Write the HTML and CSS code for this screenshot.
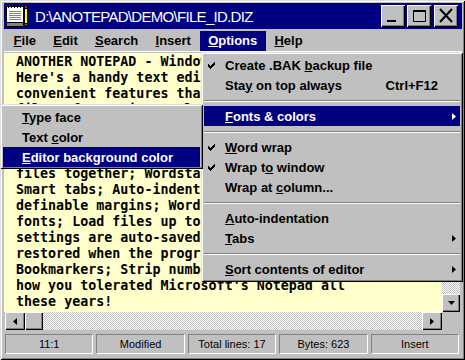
FILE: index.html
```html
<!DOCTYPE html>
<html lang="en">

<head>
    <meta charset="utf-8">
    <title>Another Notepad</title>
    <link rel="stylesheet" href="styles.css">
</head>

<body>
    <div class="window">
        <!-- title bar -->
        <header class="titlebar">
            <svg class="app-icon" viewBox="0 0 24 24" width="24" height="24">
                <rect x="1.5" y="2.5" width="17" height="20" fill="#fff" stroke="#000"/>
                <path d="M4 7.5h12M4 9.5h12M4 11.5h12M4 13.5h12M4 15.5h12" stroke="#808080"/>
                <rect x="2" y="18" width="16" height="4" fill="#808080"/>
                <path d="M2 18.5h16" stroke="#000"/>
                <path d="M3.5 1v3M6.5 1v3M9.5 1v3M12.5 1v3M15.5 1v3" stroke="#000"/>
                <rect x="19.5" y="4.5" width="3" height="15" fill="#ff0" stroke="#000"/>
                <rect x="19.5" y="1.5" width="3" height="3" fill="#f00" stroke="#000"/>
                <path d="M19.5 19.5l1.5 3.5l1.5-3.5z" fill="#c0c0c0" stroke="#000"/>
            </svg>
            <span class="titlebar__text">D:\ANOTEPAD\DEMO\FILE_ID.DIZ</span>
            <div class="titlebar__buttons">
                <span class="caption-btn">
                    <svg viewBox="0 0 24 22" width="24" height="22"><rect x="6" y="15" width="9" height="2" fill="#000"/></svg>
                </span>
                <span class="caption-btn caption-btn--max">
                    <svg viewBox="0 0 24 22" width="24" height="22"><path d="M6.5 5.5h12v11h-12z" fill="none" stroke="#000"/><rect x="6" y="5" width="13" height="2" fill="#000"/></svg>
                </span>
                <span class="caption-btn caption-btn--close">
                    <svg viewBox="0 0 24 22" width="24" height="22"><path d="M6 4l12 13M18 4l-12 13" stroke="#000" stroke-width="2"/></svg>
                </span>
            </div>
        </header>

        <!-- menu bar -->
        <nav class="menubar">
            <span class="menubar__item"><u>F</u>ile</span>
            <span class="menubar__item"><u>E</u>dit</span>
            <span class="menubar__item"><u>S</u>earch</span>
            <span class="menubar__item"><u>I</u>nsert</span>
            <span class="menubar__item menubar__item--open"><u>O</u>ptions</span>
            <span class="menubar__item"><u>H</u>elp</span>
        </nav>

        <!-- editor + scrollbars -->
        <div class="client">
            <div class="client__main">
<pre class="editor">ANOTHER NOTEPAD - Windows Notepad replacement
Here's a handy text editor for Windows with many
convenient features that Notepad lacks: Edit
files of any size; Multiple windows; Search &amp;
Replace; Printing with headers &amp; footers; Drag
&amp; drop; Insert date/time; Undo; Convert case;
Join lines; Sort lines; Fonts &amp; colors; Merge
files together; Wordstar keys; Bookmarks;
Smart tabs; Auto-indentation; Word wrap; User
definable margins; Word count; Choice of
fonts; Load files up to 16 MB; All your
settings are auto-saved on exit and
restored when the program starts again;
Bookmarkers; Strip numbers... You'll wonder
how you tolerated Microsoft's Notepad all
these years!
</pre>
                <div class="vscroll">
                    <span class="scroll-btn">
                        <svg viewBox="0 0 7 4" width="7" height="4"><path d="M3.5 0L7 4H0z"/></svg>
                    </span>
                    <span class="scroll-btn"></span>
                    <span class="scroll-track"></span>
                    <span class="scroll-btn">
                        <svg viewBox="0 0 7 4" width="7" height="4"><path d="M0 0h7L3.5 4z"/></svg>
                    </span>
                </div>
            </div>
            <div class="hscroll-row">
                <div class="hscroll">
                    <span class="scroll-btn scroll-btn--wide">
                        <svg viewBox="0 0 4 7" width="4" height="7"><path d="M4 0v7L0 3.5z"/></svg>
                    </span>
                    <span class="scroll-btn"></span>
                    <span class="scroll-track"></span>
                    <span class="scroll-btn scroll-btn--wide">
                        <svg viewBox="0 0 4 7" width="4" height="7"><path d="M0 0l4 3.5L0 7z"/></svg>
                    </span>
                </div>
                <div class="corner"></div>
            </div>
        </div>

        <!-- status bar -->
        <footer class="statusbar">
            <span class="statusbar__panel">11:1</span>
            <span class="statusbar__panel">Modified</span>
            <span class="statusbar__panel">Total lines: 17</span>
            <span class="statusbar__panel">Bytes: 623</span>
            <span class="statusbar__panel">Insert</span>
        </footer>

        <!-- Options dropdown -->
        <div class="menu menu--options">
            <div class="menu__item">
                <svg class="menu__check" viewBox="0 0 7 7" width="7" height="7"><path d="M0 2h1v1h1v1h1V3h1V2h1V1h1V0h1v3H6v1H5v1H4v1H3v1H2V6H1V5H0z"/></svg>
                <span class="menu__label">Create .BAK <u>b</u>ackup file</span>
            </div>
            <div class="menu__item">
                <span class="menu__label">Sta<u>y</u> on top always</span>
                <span class="menu__key">Ctrl+F12</span>
            </div>
            <div class="menu__sep"></div>
            <div class="menu__item menu__item--active">
                <span class="menu__label"><u>F</u>onts &amp; colors</span>
                <svg class="menu__arrow" viewBox="0 0 4 7" width="4" height="7"><path d="M0 0l4 3.5L0 7z"/></svg>
            </div>
            <div class="menu__sep"></div>
            <div class="menu__item">
                <svg class="menu__check" viewBox="0 0 7 7" width="7" height="7"><path d="M0 2h1v1h1v1h1V3h1V2h1V1h1V0h1v3H6v1H5v1H4v1H3v1H2V6H1V5H0z"/></svg>
                <span class="menu__label"><u>W</u>ord wrap</span>
            </div>
            <div class="menu__item">
                <svg class="menu__check" viewBox="0 0 7 7" width="7" height="7"><path d="M0 2h1v1h1v1h1V3h1V2h1V1h1V0h1v3H6v1H5v1H4v1H3v1H2V6H1V5H0z"/></svg>
                <span class="menu__label">Wrap t<u>o</u> window</span>
            </div>
            <div class="menu__item">
                <span class="menu__label">Wrap at <u>c</u>olumn...</span>
            </div>
            <div class="menu__sep"></div>
            <div class="menu__item">
                <span class="menu__label"><u>A</u>uto-indentation</span>
            </div>
            <div class="menu__item">
                <span class="menu__label"><u>T</u>abs</span>
                <svg class="menu__arrow" viewBox="0 0 4 7" width="4" height="7"><path d="M0 0l4 3.5L0 7z"/></svg>
            </div>
            <div class="menu__sep"></div>
            <div class="menu__item">
                <span class="menu__label"><u>S</u>ort contents of editor</span>
                <svg class="menu__arrow" viewBox="0 0 4 7" width="4" height="7"><path d="M0 0l4 3.5L0 7z"/></svg>
            </div>
        </div>

        <!-- Fonts & colors submenu -->
        <div class="menu menu--fonts">
            <div class="menu__item"><span class="menu__label"><u>T</u>ype face</span></div>
            <div class="menu__item"><span class="menu__label">Text <u>c</u>olor</span></div>
            <div class="menu__item menu__item--active"><span class="menu__label"><u>E</u>ditor background color</span></div>
        </div>
    </div>
</body>

</html>
```

FILE: styles.css
```css
/* ============ */
/* Window frame */
/* ============ */
* {
    box-sizing: border-box;
}
body {
    margin: 0;
    background-color: #c0c0c0;
    font: bold 13px 'Liberation Sans', Arial, sans-serif;
    color: #000000;
}

.window {
    position: relative;
    width: 465px;
    height: 360px;
    overflow: hidden;
    display: flex;
    flex-direction: column;
    padding: 3px 3px 5px 4px;
    background-color: #c0c0c0;
    box-shadow: inset 1px 1px #dfdfdf, inset -1px -1px #000000,
                inset 2px 2px #ffffff, inset -2px -2px #808080;
}

/* raised 3d look shared by buttons */
.caption-btn,
.scroll-btn {
    display: flex;
    align-items: center;
    justify-content: center;
    background-color: #c0c0c0;
    box-shadow: inset 1px 1px #ffffff, inset -1px -1px #000000,
                inset -2px -2px #808080;
}

/* ========= */
/* Title bar */
/* ========= */
.titlebar {
    display: flex;
    align-items: center;
    height: 26px;
    padding: 0 4px 0 1px;
    background-color: #000080;
    color: #ffffff;
}

.app-icon {
    flex: none;
}

.titlebar__text {
    margin-left: 6px;
    font: normal 15px 'Liberation Sans', Arial, sans-serif;
    letter-spacing: -0.7px;
}

.titlebar__buttons {
    display: flex;
    margin-left: auto;
}

.caption-btn {
    width: 24px;
    height: 22px;
}
.caption-btn--max {
    margin-left: 2px;
}
.caption-btn--close {
    margin-left: 3px;
}

/* ======== */
/* Menu bar */
/* ======== */
.menubar {
    display: flex;
    align-items: center;
    height: 22px;
    margin-top: 1px;
    padding-left: 1px;
    border-bottom: 1px solid #ffffff;
}

.menubar__item {
    height: 20px;
    line-height: 20px;
    padding: 0 8.6px;
}
.menubar__item--open {
    background-color: #000080;
    color: #ffffff;
}

/* ============= */
/* Editor client */
/* ============= */
.client {
    margin-top: 1px;
    margin-right: 2px;
}

.client__main {
    display: flex;
    height: 259px;
}

.editor {
    flex: 1;
    margin: 0;
    padding: 1px 0 0 12px;
    overflow: hidden;
    background-color: #ffffcc;
    font: bold 13.33px 'DejaVu Sans Mono', monospace;
    line-height: 16px;
    white-space: pre;
}

.vscroll {
    display: flex;
    flex-direction: column;
    width: 18px;
}
.vscroll .scroll-btn {
    height: 18px;
}

.scroll-track {
    flex: 1;
    background-color: #c0c0c0;
    background-image: repeating-conic-gradient(#c0c0c0 0% 25%, #ffffff 0% 50%);
    background-size: 2px 2px;
}

.hscroll-row {
    display: flex;
    height: 18px;
}

.hscroll {
    flex: 1;
    display: flex;
    padding-left: 1px;
}
.hscroll .scroll-btn {
    width: 18px;
}
.hscroll .scroll-btn--wide {
    width: 20px;
}

.corner {
    width: 18px;
    background-color: #c0c0c0;
}

/* ========== */
/* Status bar */
/* ========== */
.statusbar {
    display: grid;
    grid-template-columns: repeat(5, 1fr);
    gap: 3px;
    height: 20px;
    margin-top: 4px;
    padding: 0 3px 0 1px;
}

.statusbar__panel {
    display: flex;
    align-items: center;
    justify-content: center;
    font: normal 11px 'Liberation Sans', Arial, sans-serif;
    border-top: 1px solid #808080;
    border-left: 1px solid #808080;
    border-bottom: 1px solid #ffffff;
    border-right: 1px solid #ffffff;
}

/* ===== */
/* Menus */
/* ===== */
.menu {
    position: absolute;
    padding: 3px;
    background-color: #c0c0c0;
    box-shadow: inset 1px 1px #dfdfdf, inset -1px -1px #000000,
                inset 2px 2px #ffffff, inset -2px -2px #808080;
}
.menu--options {
    left: 201px;
    top: 52px;
    width: 262px;
}
.menu--fonts {
    left: 0;
    top: 104px;
    width: 203px;
    padding-bottom: 2px;
}

.menu__item {
    position: relative;
    display: flex;
    align-items: center;
    height: 20px;
    padding-left: 21px;
    white-space: pre;
}
.menu--fonts .menu__item {
    padding-left: 19px;
}
.menu__item--active {
    background-color: #000080;
    color: #ffffff;
}

.menu__check {
    position: absolute;
    left: 4px;
    top: 7px;
}

.menu__key {
    margin-left: auto;
    margin-right: 22px;
}

.menu__arrow {
    position: absolute;
    right: 4px;
    top: 7px;
}
.menu__item--active .menu__arrow {
    fill: #ffffff;
}

.menu__sep {
    height: 2px;
    margin: 5px 0 4px;
    border-top: 1px solid #808080;
    border-bottom: 1px solid #ffffff;
}
```
